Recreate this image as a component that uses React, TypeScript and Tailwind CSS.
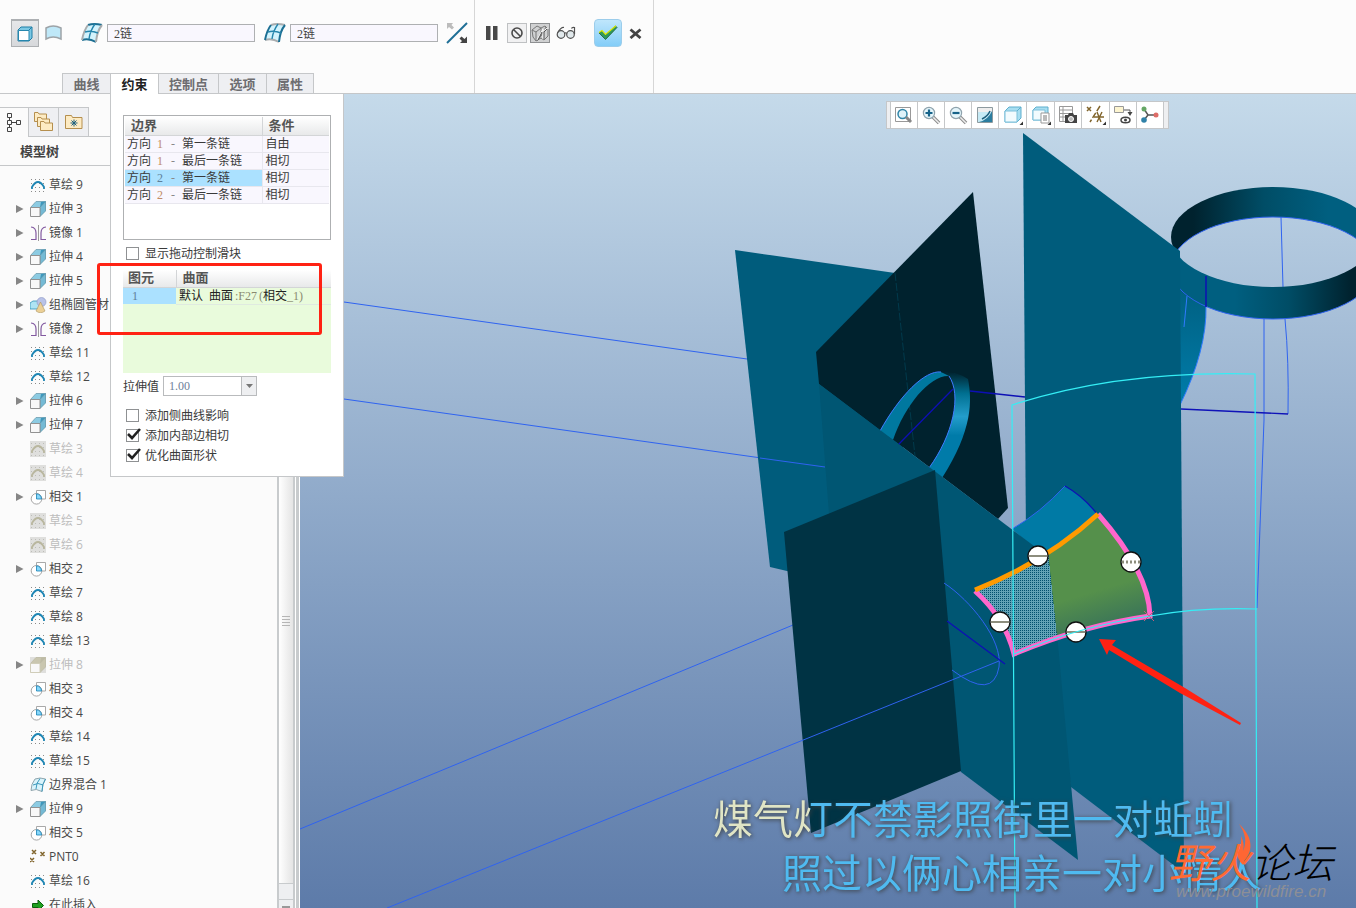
import { ReactNode } from 'react';

const treeItems: any[] = [
    { icon: 'sketch', label: '草绘 9' },
    { icon: 'extrude', label: '拉伸 3', open: true },
    { icon: 'mirror', label: '镜像 1', open: true },
    { icon: 'extrude', label: '拉伸 4', open: true },
    { icon: 'extrude', label: '拉伸 5', open: true },
    { icon: 'group', label: '组椭圆管材', open: true },
    { icon: 'mirror', label: '镜像 2', open: true },
    { icon: 'sketch', label: '草绘 11' },
    { icon: 'sketch', label: '草绘 12' },
    { icon: 'extrude', label: '拉伸 6', open: true },
    { icon: 'extrude', label: '拉伸 7', open: true },
    { icon: 'sketch', label: '草绘 3', off: true },
    { icon: 'sketch', label: '草绘 4', off: true },
    { icon: 'intersect', label: '相交 1', open: true },
    { icon: 'sketch', label: '草绘 5', off: true },
    { icon: 'sketch', label: '草绘 6', off: true },
    { icon: 'intersect', label: '相交 2', open: true },
    { icon: 'sketch', label: '草绘 7' },
    { icon: 'sketch', label: '草绘 8' },
    { icon: 'sketch', label: '草绘 13' },
    { icon: 'extrude', label: '拉伸 8', open: true, off: true },
    { icon: 'intersect', label: '相交 3' },
    { icon: 'intersect', label: '相交 4' },
    { icon: 'sketch', label: '草绘 14' },
    { icon: 'sketch', label: '草绘 15' },
    { icon: 'blend', label: '边界混合 1' },
    { icon: 'extrude', label: '拉伸 9', open: true },
    { icon: 'intersect', label: '相交 5' },
    { icon: 'points', label: 'PNT0' },
    { icon: 'sketch', label: '草绘 16' },
    { icon: 'insert', label: '在此插入' },
];

const boundaries = [
    { dir: '1', chain: '第一条链', cond: '自由' },
    { dir: '1', chain: '最后一条链', cond: '相切' },
    { dir: '2', chain: '第一条链', cond: '相切', active: true },
    { dir: '2', chain: '最后一条链', cond: '相切' },
];

const tabs = ['曲线', '约束', '控制点', '选项', '属性'];

const BlendGlyph = ({ size, alt }: any) => (
    <svg width={size} height={size} viewBox="0 0 22 22" fill="none">
        <path d="M7 3Q13 1 21 3Q16 9 15 20Q8 16 1 18Q3 8 7 3Z" fill="#d3f3fd" />
        <path d="M7 3Q13 1 21 3M1 18Q8 16 15 20" stroke={alt ? '#a9acae' : '#1c6f93'} strokeWidth="2" />
        <path d="M7 3Q3 8 1 18M21 3Q16 9 15 20" stroke={alt ? '#1c6f93' : '#a9acae'} strokeWidth="2" />
        <path d="M4 10Q10 8 17 11M14 2Q9 9 8 17" stroke="#2585ac" strokeWidth="1.4" />
    </svg>
);

function TreeIcon({ name, off }: any) {
    if (name === 'sketch') {
        return (
            <svg width="16" height="16" viewBox="0 0 16 16" fill="none">
                {off && <path d="M0 0h16v16H0z" fill="#dfdfdd" />}
                <path d="M1 2.5h15M1 14.5h15M1 6.5h15M1 10.5h15" stroke={off ? '#bdbdb8' : '#8b8b8b'} strokeDasharray="1 3" />
                <path d="M2 12V10Q8 0 14 10v2" stroke={off ? '#b9b79f' : '#1f86b4'} strokeWidth="1.8" />
            </svg>
        );
    }
    if (name === 'extrude') {
        return (
            <svg width="16" height="16" viewBox="0 0 16 16">
                {off && <path d="M0 0h16v16H0z" fill="#dfdfdd" />}
                <path d="M.5 6.5L6 .5H15.5L10 6.5Z" fill={off ? '#c9c6af' : '#8ccbe2'} stroke={off ? '#bdbaa4' : '#6f9dae'} strokeWidth=".8" />
                <path d="M10 6.5L15.5 .5L11 1Z" fill={off ? '#bdbaa4' : '#3d98bd'} />
                <path d="M10 6.5L15.5 .5V10L10 15.5Z" fill={off ? '#c9c6af' : '#74bad5'} stroke={off ? '#bdbaa4' : '#5c94a9'} strokeWidth=".8" />
                <path d="M.5 6.5H10V15.5H.5Z" fill="#f8f8f8" stroke={off ? '#d0cdb9' : '#929292'} />
            </svg>
        );
    }
    if (name === 'mirror') {
        return (
            <svg width="16" height="16" viewBox="0 0 16 16" fill="none">
                <path d="M1 2Q6 2.500 6 8V14.500H1M16 2Q11 2.500 11 8V14.500H16" stroke="#8259a0" strokeWidth="1.200" />
                <path d="M8.500 0V16" stroke="#9a9a9a" />
            </svg>
        );
    }
    if (name === 'group') {
        return (
            <svg width="17" height="16" viewBox="0 0 17 16">
                <path d="M0 6l3-2h7v6l-3 2H0z" fill="#aee4f4" stroke="#2d90b8" strokeWidth=".8" />
                <circle cx="11.500" cy="5" r="4.500" fill="#b9c3e8" stroke="#8a94c2" strokeWidth=".6" />
                <path d="M10.500 5L15 14q-4.500 3.500-9 0z" fill="#ecd096" stroke="#ab9360" strokeWidth=".6" />
            </svg>
        );
    }
    if (name === 'intersect') {
        return (
            <svg width="16" height="16" viewBox="0 0 16 16" fill="none">
                <path d="M6.500 9.500V1.500H15.500V10H6.500" fill="#fff" stroke="#a9a9a9" />
                <circle cx="6.500" cy="9.800" r="5.300" stroke="#a5a5a5" fill="#fff" />
                <path d="M6.500 4.800Q11.300 5.300 11.500 10H6.500Z" fill="#86d7fb" stroke="#1780b4" strokeWidth=".8" />
            </svg>
        );
    }
    if (name === 'blend') {
        return (
            <svg width="16" height="16" viewBox="0 0 16 16" fill="#d9f3fb">
                <path d="M5 2Q10 0 15.500 2Q12 7 12 14.500Q6 11 1 13.500Q1 7 5 2Z" stroke="#8fa5ad" />
                <path d="M3 8Q8 5 13 8M10 1.500Q6 6 6 12" stroke="#3c9abd" fill="none" />
                <path d="M15.500 2Q12 7 12 14.500" stroke="#3c9abd" fill="none" />
            </svg>
        );
    }
    if (name === 'points') {
        return (
            <svg width="16" height="16" viewBox="0 0 16 16" stroke="#80642b" strokeWidth="1.500">
                <path d="M2 1l4 4M6 1L2 5M10.500 3l4 4M14.500 3l-4 4M0 9l4 4M4 9l-4 4" />
            </svg>
        );
    }
    return (
        <svg width="16" height="16" viewBox="0 0 16 16">
            <path d="M2.500 6.500H8V3L13.500 8.500 8 14V10.500H2.500Z" fill="#1fa01f" stroke="#0c5e0c" />
        </svg>
    );
}

const FolderShape = ({ x, y }: any) => (
    <path transform={`translate(${x} ${y})`} d="M.5.500h3.500l1 1.500h7.500v7.500H.5z" fill="#fdebc3" stroke="#b58f4e" />
);

function Ribbon() {
    return (
        <header className="flex h-[94px] shrink-0 border-b border-[#c5c7c9] bg-[#fcfcfc]">
            <div className="flex flex-col justify-between border-r border-[#d6d6d6] pt-[19px]">
                <div className="flex h-7 items-center pr-1.5 pl-[11px]">
                    <button aria-label="实体" className="flex h-7 w-7 items-center justify-center border border-t-2 border-[#adb0b3] bg-linear-to-b from-[#e6e7e9] to-[#d7d9dc]">
                        <svg width="16" height="16" viewBox="0 0 16 16">
                            <path d="M1 4L4 1H15V12L12 15H1Z" fill="#7cc8e4" stroke="#1f7ea6" />
                            <path d="M1.500 4.500H12V14.500H1.500Z" fill="#fff" stroke="#2687ae" />
                            <path d="M12 4L15 1" stroke="#1f7ea6" />
                        </svg>
                    </button>
                    <button aria-label="曲面" className="ml-1.5">
                        <svg width="18" height="18" viewBox="0 0 18 18">
                            <path d="M1 4Q8 0 16 4V15Q8 11 1 15Z" fill="#bfe8f8" stroke="#9da3a7" strokeWidth="1.500" />
                        </svg>
                    </button>
                    <label htmlFor="dir1" className="ml-4.5"><BlendGlyph size={22} /></label>
                    <input id="dir1" aria-label="第一方向" defaultValue="2链" className="ml-1 h-[18px] w-[148px] border border-[#aeb0b2] bg-[#f9f7fe] px-1.5 font-['Liberation_Serif','Noto_Sans_CJK_SC',serif] text-xs text-[#444]" />
                    <label htmlFor="dir2" className="ml-[9px]"><BlendGlyph size={22} alt /></label>
                    <input id="dir2" aria-label="第二方向" defaultValue="2链" className="ml-1 h-[18px] w-[148px] border border-[#aeb0b2] bg-[#f9f7fe] px-1.5 font-['Liberation_Serif','Noto_Sans_CJK_SC',serif] text-xs text-[#444]" />
                    <button aria-label="反向" className="ml-2">
                        <svg width="22" height="22" viewBox="0 0 22 22">
                            <path d="M1 21L21 1" stroke="#1f6f96" strokeWidth="2" />
                            <path d="M1 1H7L5.500 3L8 5.500 6 7.500 3 5 1 7Z" fill="#bcbcbc" />
                            <path d="M21 21H14L16 19 13.500 16.500 15.500 14.500 18.500 17 21 14.500Z" fill="#444" />
                        </svg>
                    </button>
                </div>
                <div role="tablist" className="flex pl-[62px] text-[13px] font-bold">
                    {tabs.map((tab) => (
                        <button
                            key={tab}
                            role="tab"
                            aria-selected={tab === '约束'}
                            className={tab === '约束'
                                ? "-mb-px h-[21px] min-w-12 border-t border-l border-[#c5c7c9] bg-white px-2.5 leading-4 text-[#222]"
                                : "h-5 min-w-12 border-t border-l border-[#c5c7c9] bg-[#eeeff2] px-2.5 leading-4 text-[#6d6d70] last:border-r"}
                        >
                            {tab}
                        </button>
                    ))}
                </div>
            </div>
            <div className="flex items-start border-r border-[#d6d6d6] px-[11px] pt-[19px]">
                <div className="flex h-7 items-center">
                    <button aria-label="暂停">
                        <svg width="12" height="14" viewBox="0 0 12 14"><path d="M0 0h4.500v14H0zM7 0h4.500v14H7z" fill="#484848" /></svg>
                    </button>
                    <button aria-label="无预览" className="ml-[9px] flex h-5 w-5 items-center justify-center border border-[#bfc1c3] bg-[#f1f1f2]">
                        <svg width="12" height="12" viewBox="0 0 12 12" fill="none" stroke="#4b4b4b" strokeWidth="1.600"><circle cx="6" cy="6" r="5" /><path d="M2.500 2.500L9.500 9.500" /></svg>
                    </button>
                    <button aria-label="分离预览" className="ml-[3px] flex h-5 w-5 items-center justify-center border border-[#8e9092] bg-[#d0d1d2]">
                        <svg width="18" height="18" viewBox="0 0 18 18" fill="none" stroke="#777">
                            <path d="M1 6l5-4 4 2 4-2 3 3v7l-4 4-3-2-5 3-3-4zM1 6l4 2v8M5 8l5-4v8M10 12l-4 5M10 12l5-9" />
                            <path d="M6 16L12 5M12 15V7l5-3" stroke="#fff" /><path d="M7 16l4-8M13 15V8l3-3" stroke="#555" />
                        </svg>
                    </button>
                    <button aria-label="预览" className="ml-1.5">
                        <svg width="20" height="14" viewBox="0 0 20 14" fill="#e1e9ec" stroke="#505050" strokeWidth="1.200">
                            <circle cx="5" cy="8.500" r="3.800" /><circle cx="14.500" cy="8.500" r="3.800" />
                            <path d="M8.500 7.500Q9.800 6 11 7.500M1.500 7Q5 1 8 1.500M18.500 8V1.500Q16 1 15.500 2.500" fill="none" />
                        </svg>
                    </button>
                    <button aria-label="确定" className="ml-[18px] flex h-7 w-7 items-center justify-center rounded-sm border border-[#9ccdeb] bg-linear-to-b from-[#bfe6fc] to-[#83cdf8]">
                        <svg width="20" height="16" viewBox="0 0 20 16">
                            <path d="M1 8L4 6 7.500 10 17.500 1 19 2.500 7.500 14.500Z" fill="#2f9a5b" stroke="#1c5d35" strokeWidth=".8" />
                            <path d="M1 7.500L4 5.500 7.500 9.500 18 .800" fill="none" stroke="#dbe900" strokeWidth="1.200" />
                        </svg>
                    </button>
                    <button aria-label="取消" className="ml-[7px]">
                        <svg width="13" height="12" viewBox="0 0 13 12"><path d="M1.500 2.500L11.500 11M11.500 2.500L1.500 11" stroke="#444" strokeWidth="2.800" /></svg>
                    </button>
                </div>
            </div>
        </header>
    );
}

function ModelTree() {
    return (
        <aside className="flex w-[300px] shrink-0 overflow-hidden bg-[#fbfbfb]">
            <div className="min-w-0 flex-1">
                <div className="flex pt-[13px]">
                    <button aria-label="模型树" className="flex h-[30px] w-[29px] items-center justify-center border-t border-r border-[#c5c7c9] text-[#444]">
                        <svg width="14" height="20" viewBox="0 0 14 20" fill="none" stroke="#444">
                            <path d="M.5 .5h4v4h-4zM.5 7.500h4v4h-4zM.5 14.500h4v4h-4zM9.500 7.500h4v4h-4zM2.500 4.500v3M2.500 11.500v3M4.500 9.500h5" />
                        </svg>
                    </button>
                    <button aria-label="文件夹" className="flex h-[30px] w-[30px] items-center justify-center border-t border-r border-b border-[#c5c7c9] bg-[#eeeff2]">
                        <svg width="20" height="20" viewBox="0 0 20 20">
                            <FolderShape x={0} y={0} /><FolderShape x={3} y={5} /><FolderShape x={6} y={9} />
                        </svg>
                    </button>
                    <button aria-label="收藏夹" className="flex h-[30px] w-[30px] items-center justify-center border-t border-r border-b border-[#c5c7c9] bg-[#eeeff2]">
                        <svg width="18" height="16" viewBox="0 0 18 16">
                            <path d="M.5 14.500V1.500h6l1 2h9.500v11z" fill="#fdebc3" stroke="#b58f4e" />
                            <path d="M9 5.500v7M5.500 9h7M6.500 6.500l5 5M11.500 6.500l-5 5" stroke="#1d617f" />
                        </svg>
                    </button>
                    <div className="flex-1 border-b border-[#c5c7c9]" />
                </div>
                <h2 className="h-[29px] border-b border-[#c5c7c9] pl-5 text-[13px] leading-7 font-bold text-[#444]">模型树</h2>
                <ul className="pt-[7px]">
                    {treeItems.map((item) => (
                        <li key={item.label} className="flex h-6 items-center pl-4 whitespace-nowrap">
                            <span className="w-3.5">
                                {item.open && <svg width="8" height="8" viewBox="0 0 8 8"><path d="M0 0L7.500 4 0 8Z" fill="#868686" /></svg>}
                            </span>
                            <span className="mr-[3px] w-4"><TreeIcon name={item.icon} off={item.off} /></span>
                            <span className={item.off ? "text-xs text-[#bdbdbd]" : "text-xs text-[#484848]"}>{item.label}</span>
                        </li>
                    ))}
                </ul>
            </div>
            <div className="flex w-[18px] flex-col border-x-2 border-[#c8cbcd] bg-[#eeeff1]">
                <div className="flex flex-1 items-center justify-center border-b border-[#c8cbcd] bg-linear-to-r from-white to-[#e4e4e4] pt-[265px]">
                    <svg width="8" height="12" viewBox="0 0 8 12"><path d="M0 1.500h8M0 4.500h8M0 7.500h8M0 10.500h8" stroke="#b5b5b5" /></svg>
                </div>
                <div className="h-4 border-b border-[#c8cbcd]" />
                <div className="flex h-2 items-end justify-center"><div className="h-0.5 w-2 bg-[#999]" /></div>
            </div>
            <div className="w-[5px] border-x border-white bg-[#c8cbcd]" />
        </aside>
    );
}

const Tick = ({ id, checked, children }: { id: string; checked?: boolean; children: ReactNode }) => (
    <div className="relative flex h-5 items-center pl-[3px]">
        <input id={id} type="checkbox" defaultChecked={checked} className="peer h-[13px] w-[13px] appearance-none border border-[#8f9193] bg-white" />
        <svg className="pointer-events-none absolute top-0.5 left-1 hidden peer-checked:block" width="15" height="14" viewBox="0 0 15 14">
            <path d="M1 7L5 11 13 2" fill="none" stroke="#222" strokeWidth="2.600" />
        </svg>
        <label htmlFor={id} className="ml-1.5 pt-0.5">{children}</label>
    </div>
);

function ConstraintPanel() {
    return (
        <section className="absolute top-0 left-[110px] w-[234px] border-r border-b border-l border-[#c5c7c9] bg-white px-3 pt-[21px] pb-[11px] font-['Liberation_Serif','Noto_Sans_CJK_SC',serif] text-xs text-[#3a3a3a]">
            <div className="h-[125px] border border-[#aeb0b2] p-px">
                <table className="w-full table-fixed border-collapse text-left">
                    <thead>
                        <tr className="h-[18px] bg-linear-to-b from-white to-[#e8e9ea] text-[13px] leading-4 text-[#555]">
                            <th className="w-[137px] border-r border-b border-[#d3d5d7] p-0 pt-px pl-1.5">边界</th>
                            <th className="border-b border-[#d3d5d7] p-0 pt-px pl-1.5">条件</th>
                        </tr>
                    </thead>
                    <tbody>
                        {boundaries.map((row) => (
                            <tr key={row.dir + row.chain} className="h-[17px] bg-[#f9f7fe] leading-4">
                                <td className={row.active ? "border-r border-b border-[#e8e7ee] bg-[#abe1ff] p-0 pl-0.5" : "border-r border-b border-[#e8e7ee] p-0 pl-0.5"}>
                                    方向 <span className={row.active ? "mx-[3px] text-[#5f7f99]" : "mx-[3px] text-[#c08a66]"}>{row.dir}</span> <span className="mr-1 ml-0.5 text-[#888]">-</span> {row.chain}
                                </td>
                                <td className="border-b border-[#e8e7ee] p-0 pl-[3px]">{row.cond}</td>
                            </tr>
                        ))}
                    </tbody>
                </table>
            </div>
            <div className="pt-[3px] pb-[7px]">
                <Tick id="drag">显示拖动控制滑块</Tick>
            </div>
            <div className="h-[103px] bg-[#e9fbdc]">
                <table className="w-full table-fixed border-collapse text-left">
                    <thead>
                        <tr className="h-[17px] bg-linear-to-b from-white to-[#e8e9ea] text-[13px] leading-4 text-[#555]">
                            <th className="w-[53px] border-r border-b border-[#d3d5d7] p-0 pl-[5px]">图元</th>
                            <th className="border-b border-[#d3d5d7] p-0 pl-1.5">曲面</th>
                        </tr>
                    </thead>
                    <tbody>
                        <tr className="h-[17px] leading-4">
                            <td className="bg-[#abe1ff] p-0 pl-[9px] text-[#5f7f99]">1</td>
                            <td className="border-b border-[#e0eae0] p-0 pl-[3px] text-[#222]">
                                默认 <span className="ml-[3px]">曲面</span><span className="ml-0.5 text-[#8a8a70]">:F27</span><span className="ml-0.5 text-[#8a8a70]">(</span>相交<span className="text-[#8a8a70]">_1)</span>
                            </td>
                        </tr>
                    </tbody>
                </table>
            </div>
            <div className="mt-[3px] flex h-5 items-center">
                <label htmlFor="stretch" className="pt-0.5">拉伸值</label>
                <div className="relative ml-1">
                    <select id="stretch" className="block h-5 w-[94px] appearance-none border border-[#b9bbbd] bg-white pl-[5px] text-[#6d7f99]">
                        <option>1.00</option>
                    </select>
                    <span className="pointer-events-none absolute top-0 right-0 flex h-5 w-4 items-center justify-center border border-[#b9bbbd] bg-[#eeeff1]">
                        <svg width="7" height="4" viewBox="0 0 7 4"><path d="M0 0h7L3.500 4z" fill="#777" /></svg>
                    </span>
                </div>
            </div>
            <div className="mt-[9px]">
                <Tick id="side">添加侧曲线影响</Tick>
                <Tick id="inner" checked>添加内部边相切</Tick>
                <Tick id="shape" checked>优化曲面形状</Tick>
            </div>
        </section>
    );
}

const Lens = ({ children }: any) => (
    <>
        <path d="M12 12L18 18" stroke="#8c8c8c" strokeWidth="3.500" />
        <path d="M12 12L18 18" stroke="#eee" strokeWidth="1.500" />
        <circle cx="8" cy="8" r="5.600" fill="#e4f5fb" stroke="#8fa3ad" strokeWidth="1.200" />
        {children}
    </>
);

const viewTools: any[] = [
    { name: '重新调整', art: <><path d="M1.500 2.500h15v14h-15z" fill="#fff" stroke="#999" /><circle cx="8.500" cy="9" r="4.500" fill="#dff3fa" stroke="#3186a9" strokeWidth="1.500" /><path d="M12 12l5 5" stroke="#888" strokeWidth="3" /></> },
    { name: '放大', art: <Lens><path d="M8 4.500v7M4.500 8h7" stroke="#16638a" strokeWidth="2.200" /></Lens> },
    { name: '缩小', art: <Lens><path d="M4.500 8h7" stroke="#16638a" strokeWidth="2.200" /></Lens> },
    { name: '重画', art: <><path d="M2.500 2.500h15v15h-15z" fill="#c6eaf5" stroke="#8d9a9f" /><path d="M3 3h14v4H3z" fill="#eee" /><path d="M4 17Q13 15 17 6V17z" fill="#2b7d9f" /><path d="M7 14Q13 11 15 6" stroke="#1d5f7c" strokeWidth="1.500" /></> },
    { name: '显示样式', menu: true, art: <><path d="M2 6l4-4h12v11l-4 4H2z" fill="#a7def1" stroke="#5eafce" /><path d="M2 6h12v11H2z" fill="#f2fbfe" stroke="#7cc0da" /><path d="M14 6l4-4" stroke="#5eafce" /></> },
    { name: '已保存方向', menu: true, art: <><path d="M2 5l3-3h12v10l-3 3H2z" fill="#a7def1" stroke="#5eafce" /><path d="M2 5h12v10H2z" fill="#f2fbfe" stroke="#7cc0da" /><path d="M10 8h8v10h-8z" fill="#fff" stroke="#999" /><path d="M12 11h4M12 13h4M12 15h4" stroke="#777" /></> },
    { name: '视图管理器', art: <><path d="M1.500 1.500h13v15h-13zM1.500 5h13M1.500 8.500h13M1.500 12h13M5 2v14" fill="#fff" stroke="#999" /><path d="M7 10h3l1-2h4l1 2h3v8H7z" fill="#444" /><circle cx="13" cy="14" r="2.500" fill="#bbb" stroke="#fff" /></> },
    { name: '基准显示', menu: true, art: <><path d="M1 2l4 4M5 2L1 6M14 1L4 17" stroke="#80642b" strokeWidth="1.500" strokeDasharray="6 2" /><path d="M8 12h10M11 7l4 10M16 7l-5 10" stroke="#80642b" strokeWidth="1.400" /></> },
    { name: '注释显示', art: <><path d="M1.500 1.500h9v6h-9z" fill="#fdf5d0" stroke="#999" /><path d="M11 5h6v4" fill="none" stroke="#555" /><path d="M14.500 7h5L17 11z" fill="#444" /><ellipse cx="12.500" cy="15" rx="4.500" ry="2.800" fill="#fff" stroke="#444" strokeWidth="1.500" /><circle cx="12.500" cy="15" r="1.500" fill="#444" /></> },
    { name: '旋转中心', art: <><path d="M4 4l4 6h8M8 10l-4 5" fill="none" stroke="#555" strokeWidth="1.500" /><circle cx="4" cy="4" r="2.500" fill="#65a765" /><circle cx="16" cy="10" r="2.500" fill="#dd6d68" /><circle cx="4" cy="15" r="2.800" fill="#2f81a8" /></> },
];

const handles = [
    { x: 1038, y: 556 },
    { x: 1131, y: 562, dashed: true },
    { x: 1076, y: 632 },
    { x: 1000, y: 622 },
];

function Scene() {
    return (
        <svg className="block h-full w-full" viewBox="300 94 1056 814" preserveAspectRatio="xMidYMid slice" fill="none">
            <defs>
                <linearGradient id="back" gradientUnits="userSpaceOnUse" x1="1171" x2="1356" y1="0" y2="0">
                    <stop offset=".12" stopColor="#00222e" /><stop offset=".5" stopColor="#004d66" /><stop offset=".85" stopColor="#005f80" />
                </linearGradient>
                <linearGradient id="front" gradientUnits="userSpaceOnUse" x1="1181" x2="1360" y1="0" y2="0">
                    <stop offset=".3" stopColor="#005f80" /><stop offset=".6" stopColor="#004d66" /><stop offset=".95" stopColor="#00222e" />
                </linearGradient>
                <linearGradient id="tube" gradientUnits="userSpaceOnUse" x1="0" x2="0" y1="372" y2="478">
                    <stop stopColor="#00222e" /><stop offset=".2" stopColor="#006f90" /><stop offset=".42" stopColor="#239dcb" /><stop offset=".6" stopColor="#007ba9" />
                </linearGradient>
                <linearGradient id="leg" x1="0" x2="0" y1="0" y2="1"><stop stopColor="#005f80" /><stop offset="1" stopColor="#007dab" /></linearGradient>
                <linearGradient id="green" x1="0" x2=".25" y1="0" y2="1"><stop offset=".7" stopColor="#55904b" /><stop offset="1" stopColor="#3b7558" /></linearGradient>
                <pattern id="dots" width="2" height="2" patternUnits="userSpaceOnUse">
                    <path d="M0 0h2v2H0z" fill="#62a3b6" /><path d="M0 0h1v1H0z" fill="#00506d" />
                </pattern>
                <mask id="outBottom"><path d="M1100 100h300v300h-300z" fill="#fff" /><ellipse cx="1273" cy="268" rx="102" ry="51" fill="#000" /></mask>
                <mask id="outTop"><path d="M1100 100h300v300h-300z" fill="#fff" /><ellipse cx="1273" cy="237" rx="102" ry="50" fill="#000" /></mask>
            </defs>

            {/* left planes */}
            <path d="M344 302L747 359M344 399L825 467M300 829L793 625" stroke="#2f63f0" />
            <path d="M735 250L895 273 910 600 770 567Z" fill="#005c7c" />
            <path d="M760 458L825 467" stroke="#2f63f0" />
            <path d="M973 192L1008 508 998 519 819 384 816 352Z" fill="#00222e" />
            <path d="M895 273L915 456" stroke="#003a4c" strokeDasharray="8 2" />
            <path d="M880 431C900 395 925 370 941 372L956 374 949 376C930 375 905 405 893 440Z" fill="#00789f" />
            <path d="M880 431C900 395 925 370 941 372" stroke="#3f7bff" />
            <path d="M941 372Q957 371 968 379C972 400 973 430 942 478L929 468C953 435 962 395 949 376Z" fill="url(#tube)" />
            <path d="M929 468C953 435 962 395 949 376" stroke="#3f7bff" />
            <path d="M953 389L898 445M970 391L1025 397" stroke="#0d0fb5" strokeWidth="1.300" />

            {/* big ring on the right */}
            <path d="M1281 217L1283 287M1264 319V420L1257 608M1285 319Q1289 360 1288 414" stroke="#2f63f0" />
            <path d="M1181 409L1288 414" stroke="#0f12b8" strokeWidth="1.300" />
            <ellipse cx="1273" cy="237" rx="102" ry="50" fill="url(#back)" mask="url(#outBottom)" />
            <path d="M1180 285L1206 306Q1207 350 1180 405Z" fill="url(#leg)" />
            <path d="M1206 306Q1207 350 1180 405M1187 296L1184 327" stroke="#2f7bff" />
            <ellipse cx="1273" cy="268" rx="102" ry="51" fill="url(#front)" mask="url(#outTop)" />
            <ellipse cx="1273" cy="268" rx="102" ry="51" stroke="#2f63f0" />
            <path d="M1206 276V307" stroke="#0d0fb5" strokeWidth="1.500" />
            <path d="M1023 133L1180 251 1184 873 1071 787 1026 540Z" fill="#005c7c" />

            {/* patch and the planes it cuts */}
            <path d="M1012 529Q1040 513 1065 486Q1083 496 1098 515L1050 562Z" fill="#007aa5" />
            <path d="M1012 529Q1040 513 1065 486" stroke="#2f63f0" />
            <path d="M1065 486Q1083 496 1098 515" stroke="#0d0fb5" strokeWidth="1.300" />
            <path d="M819 384L1050 558 1078 860 961 772 829 514Z" fill="#005673" />
            <path d="M784 532L935 470 961 771 811 833Z" fill="#003344" />
            <path d="M387 908L999 661M944 583C970 600 1003 640 999 667Q993 701 952 670" stroke="#2f63f0" />
            <path d="M947 621L1005 664" stroke="#0d0fb5" strokeWidth="1.300" />
            <path d="M1048 552Q1075 535 1098 514Q1147 570 1150 616Q1100 622 1057 637Z" fill="url(#green)" />
            <path d="M975 590Q1015 574 1048 552L1057 637 1014 654Q1005 618 975 590Z" fill="url(#dots)" shapeRendering="crispEdges" />
            <path d="M1098 514Q1149 572 1150 616Q1080 626 1014 654Q1005 618 975 591" stroke="#ff66cc" strokeWidth="5" />
            <path d="M975 590Q1046 562 1098 514" stroke="#ff9a00" strokeWidth="5" />
            <path d="M1144 611l10 10M1154 611l-10 10" stroke="#c0607a" />
            <path d="M1257 908L1255 374Q1120 370 1012 405L1015 908" stroke="#34eef5" strokeWidth="1.200" />
            {handles.map((h) => (
                <g key={h.x}>
                    <circle cx={h.x} cy={h.y} r="10" fill="#fff" stroke="#111" strokeWidth="1.300" />
                    <path d={`M${h.x - 9} ${h.y}h18`} stroke="#8d8d7d" strokeWidth={h.dashed ? 3 : 2} strokeDasharray={h.dashed ? '2 2' : undefined} />
                </g>
            ))}
            <path d="M1014 654Q1080 626 1150 616Q1200 607 1257 609" stroke="#34eef5" strokeWidth="1.200" />
            <path d="M1099 639L1116 640 1112 645 1185 688 1241 723 1240 725 1180 693 1109 650 1107 655Z" fill="#ff2213" />
        </svg>
    );
}

function Viewport() {
    return (
        <main className="relative min-w-0 flex-1 overflow-hidden bg-linear-to-b from-[#c5daea] to-[#5d7ba9]">
            <Scene />
            <div className="absolute top-[7px] left-[586px] flex h-7 border border-[#c5c7c9] bg-[#eeeff1] pr-1 pl-[3px]">
                {viewTools.map((tool) => (
                    <button
                        key={tool.name}
                        aria-label={tool.name}
                        className={tool.menu
                            ? "flex w-7 items-center justify-center border-l border-[#c5c7c9] bg-white"
                            : "flex w-[27px] items-center justify-center border-l border-[#c5c7c9] bg-white last:w-7 last:border-r"}
                    >
                        <svg width="20" height="20" viewBox="0 0 20 20" fill="none">
                            {tool.art}
                            {tool.menu && <path d="M20 16.500v3.500h-3.500z" fill="#333" />}
                        </svg>
                    </button>
                ))}
            </div>
            <div className="absolute bottom-2 left-[413px] text-[40px] leading-[54px] font-normal whitespace-nowrap drop-shadow-[1px_1px_2px_#3b3f42]">
                <p className="bg-linear-to-r from-[#e0e5c5] from-[97px] to-[#4fbaf0] to-[97px] bg-clip-text text-transparent">煤气灯不禁影照街里一对蚯蚓</p>
                <p className="pl-[69px] text-[#4fbaf0]">照过以俩心相亲一对小情人</p>
            </div>
            <div className="absolute right-[23px] bottom-1.5 flex flex-col items-center">
                <p className="text-[41px] leading-[56px] font-light text-black italic"><span className="font-normal text-[#ff6a33]">野火</span>论坛</p>
                <p className="-mt-2 font-['Liberation_Sans',sans-serif] text-[17px] leading-5 text-[#8d8f96] italic">www.proewildfire.cn</p>
                <svg className="absolute -top-2.5 left-[66px]" width="18" height="42" viewBox="0 0 18 42">
                    <path d="M4 0C17 12 18 24 12 33Q9 36 8 41Q1 34 3 28Q7 22 6 12Q10 20 8 27Q14 14 4 0Z" fill="#ff6633" />
                </svg>
            </div>
        </main>
    );
}

export default function App() {
    return (
        <div className="flex h-screen flex-col overflow-hidden bg-[#fbfbfb] font-['Open_Sans','Noto_Sans_CJK_SC',sans-serif]">
            <Ribbon />
            <div className="relative flex min-h-0 flex-1">
                <ModelTree />
                <Viewport />
                <ConstraintPanel />
                <div className="pointer-events-none absolute top-[169px] left-[97px] h-[72px] w-[225px] rounded-[3px] border-3 border-[#ff2213]" />
            </div>
        </div>
    );
}
